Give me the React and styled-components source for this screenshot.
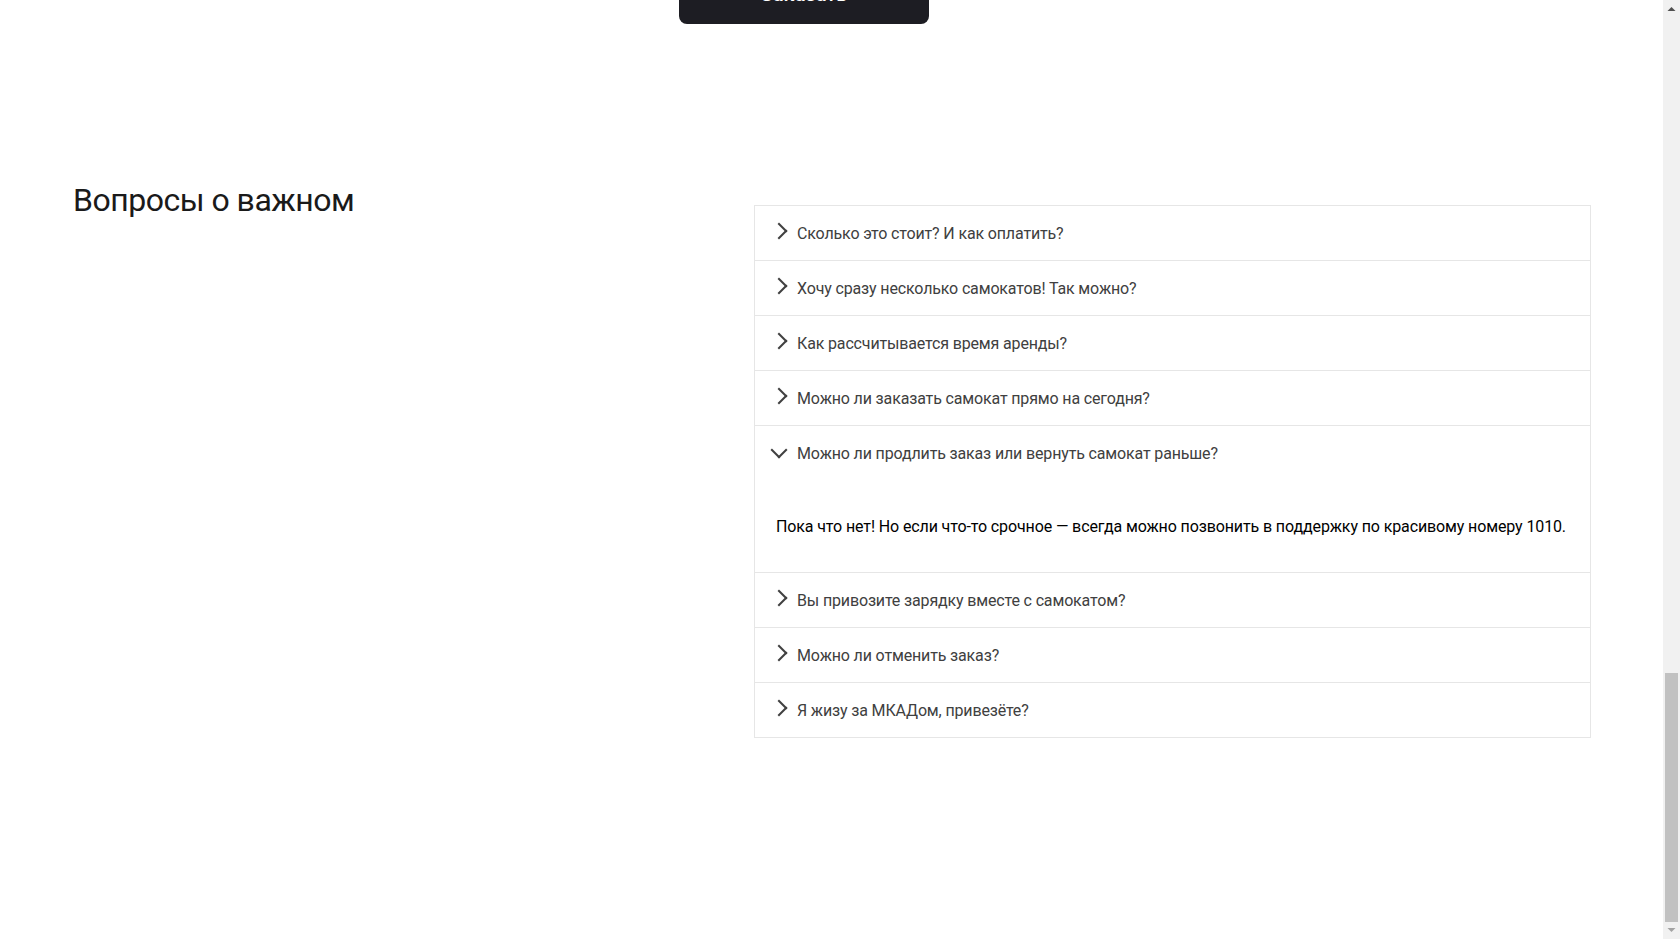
import React, { useLayoutEffect, useRef, useState } from "react";
import styled, { createGlobalStyle } from "styled-components";

const GlobalStyle = createGlobalStyle`
  *, *::before, *::after {
    box-sizing: border-box;
  }
  html, body {
    margin: 0;
    padding: 0;
    height: 100%;
    overflow: hidden;
    background: #fff;
  }
  body {
    font-family: Roboto, "Noto Sans", Arial, sans-serif;
  }
`;

const questions = [
  {
    q: "Сколько это стоит? И как оплатить?",
    a: "Сутки — 400 рублей. Оплата курьеру — наличными или картой."
  },
  {
    q: "Хочу сразу несколько самокатов! Так можно?",
    a: "Пока что у нас так: один заказ — один самокат. Если хотите покататься с друзьями, можете просто сделать несколько заказов — один за другим."
  },
  {
    q: "Как рассчитывается время аренды?",
    a: "Допустим, вы оформляете заказ на 8 мая. Мы привозим самокат 8 мая в течение дня. Отсчёт времени аренды начинается с момента, когда вы оплатите заказ курьеру."
  },
  {
    q: "Можно ли заказать самокат прямо на сегодня?",
    a: "Только начиная с завтрашнего дня. Но скоро станем расторопнее."
  },
  {
    q: "Можно ли продлить заказ или вернуть самокат раньше?",
    a: "Пока что нет! Но если что-то срочное — всегда можно позвонить в поддержку по красивому номеру 1010."
  },
  {
    q: "Вы привозите зарядку вместе с самокатом?",
    a: "Самокат приезжает к вам с полной зарядкой. Этого хватает на восемь суток — даже если будете кататься без передышек и во сне. Зарядка не понадобится."
  },
  {
    q: "Можно ли отменить заказ?",
    a: "Да, пока самокат не привезли. Штрафа не будет, объяснительной записки тоже не попросим. Все же свои."
  },
  {
    q: "Я жизу за МКАДом, привезёте?",
    a: "Да, обязательно. Всем самокатов! И Москве, и Московской области."
  }
];

const Screen = styled.div`
  display: flex;
  height: 100vh;
`;

const Viewport = styled.div`
  flex: 1;
  min-width: 0;
  overflow-y: scroll;
  scrollbar-width: none;
  color: #000;
`;

const ScrollBar = styled.div`
  display: flex;
  flex-direction: column;
  flex: none;
  width: 17px;
  background: #f1f1f1;
`;

const ScrollButton = styled.div`
  flex: none;
  height: 17px;
  color: ${(p) => (p.$disabled ? "#a3a3a3" : "#505050")};

  svg {
    display: block;
  }
`;

const Track = styled.div`
  flex: 1;
  display: flex;
  flex-direction: column;
  padding: 0 2px;
`;

const Thumb = styled.div`
  flex: none;
  background: #c1c1c1;
`;

const OrderSection = styled.section`
  padding-top: 2439px;
  padding-left: 679px;
`;

const OrderButton = styled.button`
  display: block;
  width: 250px;
  height: 60px;
  border: none;
  border-radius: 8px;
  background: #1d1d23;
  color: #fff;
  font-family: Roboto, "Noto Sans", Arial, sans-serif;
  font-size: 20px;
  font-weight: 500;
  cursor: pointer;
`;

const FaqSection = styled.section`
  display: flex;
  justify-content: space-between;
  align-items: flex-start;
  padding: 156px 72px 201px 73px;
`;

const Title = styled.h2`
  margin: 0;
  font-family: Roboto, "Noto Sans", Arial, sans-serif;
  font-size: 32px;
  font-weight: 400;
  letter-spacing: -0.5px;
  line-height: 40px;
  color: #1a1a1a;
`;

const Accordion = styled.div`
  width: 837px;
  margin-top: 25px;
  border: 1px solid #e6e6e6;
`;

const Item = styled.div`
  & + & {
    border-top: 1px solid #e6e6e6;
  }
`;

const Question = styled.button`
  display: flex;
  align-items: center;
  width: 100%;
  height: 54px;
  padding: 0 18px;
  border: none;
  background: #fff;
  color: #404040;
  font-family: Roboto, "Noto Sans", Arial, sans-serif;
  font-size: 16px;
  letter-spacing: -0.15px;
  text-align: left;
  cursor: pointer;

  &::before {
    content: "";
    flex: none;
    box-sizing: content-box;
    width: 10px;
    height: 10px;
    margin-right: 12px;
    border-right: 2px solid currentColor;
    border-bottom: 2px solid currentColor;
    transform: ${(p) =>
      p.$open ? "translateY(-3px) rotate(45deg)" : "translateY(-2px) rotate(-45deg)"};
  }
`;

const Answer = styled.div`
  padding: 35px 16px 34px 21px;
  font-size: 16px;
  letter-spacing: -0.12px;
  line-height: 23px;
  color: #000;
`;

function Faq() {
  const [open, setOpen] = useState(4);

  return (
    <Accordion>
      {questions.map((item, index) => (
        <Item key={index}>
          <Question
            type="button"
            $open={open === index}
            onClick={() => setOpen(open === index ? -1 : index)}
          >
            {item.q}
          </Question>
          {open === index ? <Answer>{item.a}</Answer> : null}
        </Item>
      ))}
    </Accordion>
  );
}

const Arrow = ({ up }) => (
  <svg width="17" height="17" viewBox="0 0 17 17">
    <polygon
      fill="currentColor"
      points={up ? "4.5,11 12.5,11 8.5,7" : "4.5,6 12.5,6 8.5,10"}
    />
  </svg>
);

export default function App() {
  const view = useRef(null);
  const track = useRef(null);
  const [thumb, setThumb] = useState({ top: 0, height: 0 });

  const measure = () => {
    const v = view.current;
    const t = track.current;
    if (!v || !t) return;
    const h = t.clientHeight;
    setThumb({
      top: (v.scrollTop / v.scrollHeight) * h,
      height: (v.clientHeight / v.scrollHeight) * h
    });
  };

  // страница прокручена до самого низа
  useLayoutEffect(() => {
    if (view.current) {
      view.current.scrollTop = view.current.scrollHeight;
    }
    measure();
  }, []);

  return (
    <Screen>
      <GlobalStyle />
      <Viewport ref={view} onScroll={measure}>
        <OrderSection>
          <OrderButton type="button">Заказать</OrderButton>
        </OrderSection>
        <FaqSection>
          <Title>Вопросы о важном</Title>
          <Faq />
        </FaqSection>
      </Viewport>
      <ScrollBar>
        <ScrollButton>
          <Arrow up />
        </ScrollButton>
        <Track ref={track}>
          <Thumb style={{ marginTop: thumb.top, height: thumb.height }} />
        </Track>
        <ScrollButton $disabled>
          <Arrow />
        </ScrollButton>
      </ScrollBar>
    </Screen>
  );
}
